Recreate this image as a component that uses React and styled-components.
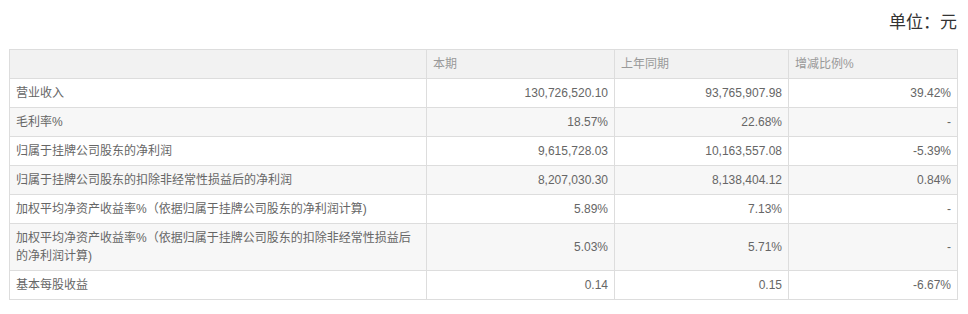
import React from "react";
import styled, { createGlobalStyle } from "styled-components";

const GlobalStyle = createGlobalStyle`
  body {
    margin: 0;
    background: #fff;
    font-family: "Liberation Sans", "Noto Sans CJK SC", sans-serif;
  }
`;

const rows = [
  ["营业收入", "130,726,520.10", "93,765,907.98", "39.42%"],
  ["毛利率%", "18.57%", "22.68%", "-"],
  ["归属于挂牌公司股东的净利润", "9,615,728.03", "10,163,557.08", "-5.39%"],
  ["归属于挂牌公司股东的扣除非经常性损益后的净利润", "8,207,030.30", "8,138,404.12", "0.84%"],
  ["加权平均净资产收益率%（依据归属于挂牌公司股东的净利润计算)", "5.89%", "7.13%", "-"],
  ["加权平均净资产收益率%（依据归属于挂牌公司股东的扣除非经常性损益后的净利润计算)", "5.03%", "5.71%", "-"],
  ["基本每股收益", "0.14", "0.15", "-6.67%"],
];

const Page = styled.div`
  padding: 11px 11px 0 9px;
`;

const Unit = styled.div`
  text-align: right;
  font-size: 17px;
  line-height: 24px;
  color: #333;
  margin-bottom: 14px;
`;

const Table = styled.table`
  width: 948px;
  border-collapse: collapse;
  table-layout: fixed;
  font-size: 12px;
  line-height: 18px;
`;

const Row = styled.tr`
  background: ${({ $stripe }) => ($stripe ? "#f7f7f7" : "#fff")};
`;

const HeadRow = styled.tr`
  background: #f2f2f2;
`;

const Th = styled.th`
  border: 1px solid #dddddd;
  padding: 5px 6px;
  font-weight: normal;
  text-align: left;
  color: #999;
`;

const Td = styled.td`
  border: 1px solid #dddddd;
  padding: ${({ $num }) => ($num ? "5px 6px" : "5px 14px 5px 6px")};
  color: #666;
  text-align: ${({ $num }) => ($num ? "right" : "left")};
`;

export default function App() {
  return (
    <>
      <GlobalStyle />
      <Page>
        <Unit>单位：元</Unit>
        <Table>
          <colgroup>
            <col style={{ width: 417 }} />
            <col style={{ width: 188 }} />
            <col style={{ width: 174 }} />
            <col style={{ width: 169 }} />
          </colgroup>
          <thead>
            <HeadRow>
              <Th></Th>
              <Th>本期</Th>
              <Th>上年同期</Th>
              <Th>增减比例%</Th>
            </HeadRow>
          </thead>
          <tbody>
            {rows.map((r, i) => (
              <Row key={i} $stripe={i % 2 === 1}>
                <Td>{r[0]}</Td>
                <Td $num>{r[1]}</Td>
                <Td $num>{r[2]}</Td>
                <Td $num>{r[3]}</Td>
              </Row>
            ))}
          </tbody>
        </Table>
      </Page>
    </>
  );
}
